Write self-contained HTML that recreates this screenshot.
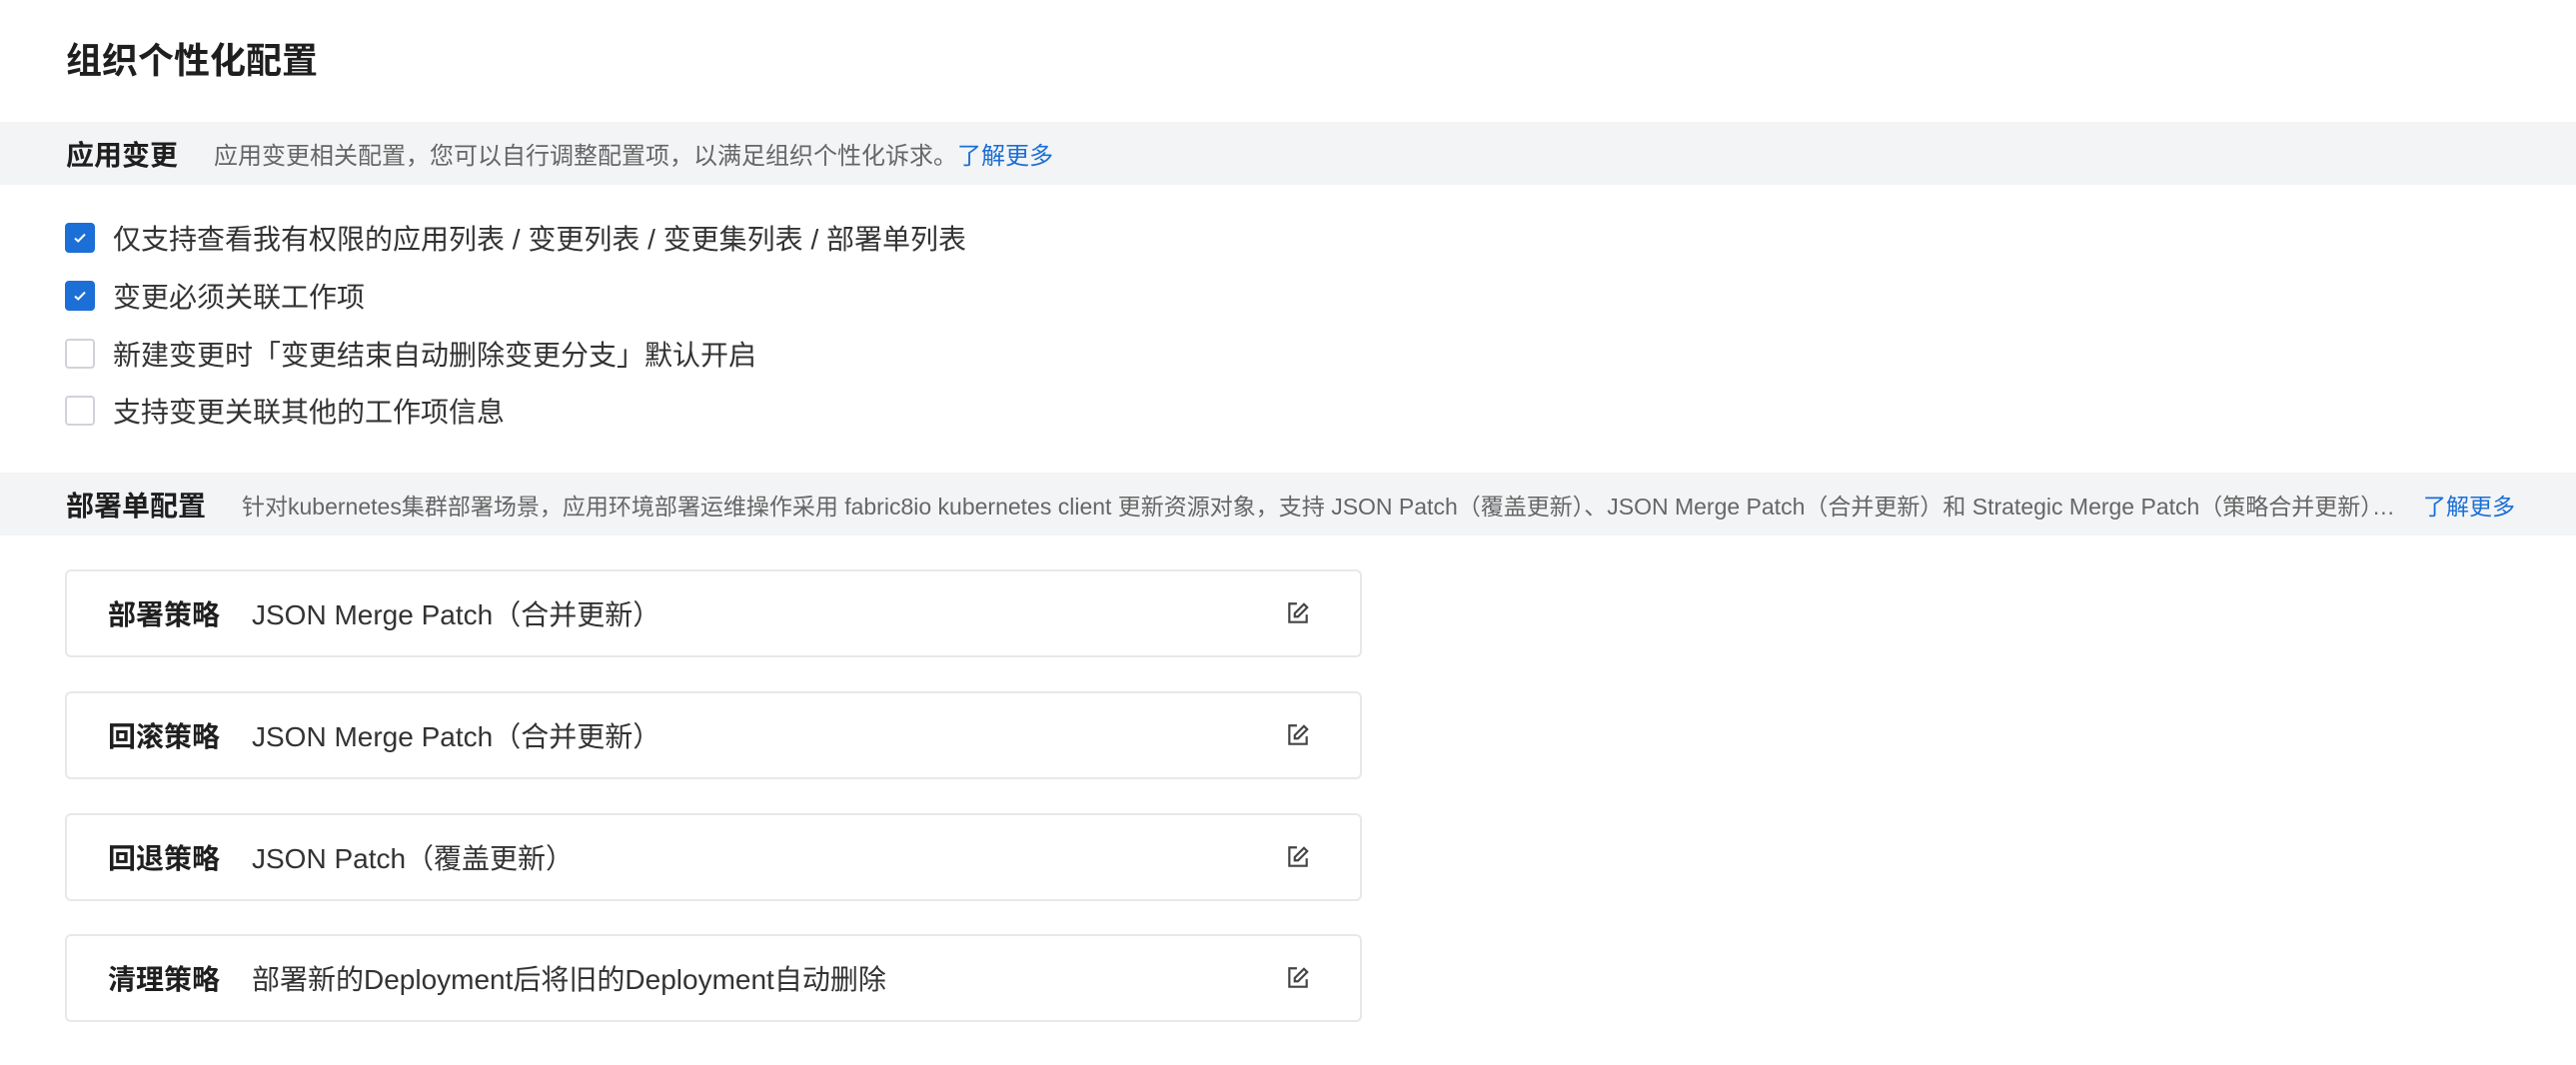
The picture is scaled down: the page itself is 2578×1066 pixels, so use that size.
<!DOCTYPE html>
<html><head><meta charset="utf-8"><style>
*{box-sizing:border-box;margin:0;padding:0}
body{width:2578px;height:1066px;background:#fff;font-family:"Liberation Sans","Noto Sans CJK SC",sans-serif;color:#1f1f1f;overflow:hidden;position:relative}
.title{position:absolute;left:66px;top:38px;font-size:36px;font-weight:bold;line-height:46px}
.band{position:absolute;left:0;width:2578px;height:63px;background:#f3f4f6;display:flex;align-items:center;padding-left:66px;white-space:nowrap}
.band b{font-size:28px;font-weight:bold;color:#1f1f1f}
.band .d{font-size:23px;color:#666;overflow:hidden;text-overflow:ellipsis}
.band a{font-size:23px;color:#1b6fd6;text-decoration:none}
.cb{position:absolute;left:65px;display:flex;align-items:center;font-size:28px;color:#333}
.box{width:30px;height:30px;border-radius:4px;border:2px solid #d0d3d9;margin-right:18px;display:flex;align-items:center;justify-content:center}
.box.on{background:#1b6fd6;border-color:#1b6fd6}
.card{position:absolute;left:65px;width:1298px;height:88px;border:2px solid #e6e8eb;border-radius:6px;display:flex;align-items:center;font-size:28px}
.card .l{position:absolute;left:41px;font-weight:bold;color:#1f1f1f}
.card .v{position:absolute;left:185px;color:#333}
.card svg{position:absolute;left:1219px;top:29px}
</style></head><body>
<div class="title">组织个性化配置</div>
<div class="band" style="top:122px"><b>应用变更</b><span class="d" style="margin-left:36px;font-size:24px">应用变更相关配置，您可以自行调整配置项，以满足组织个性化诉求。</span><a style="font-size:24px">了解更多</a></div>
<div class="cb" style="top:218px"><div class="box on"><svg width="16" height="16" viewBox="0 0 16 16"><path d="M3 8.5l3.2 3L13 4.5" fill="none" stroke="#fff" stroke-width="2"/></svg></div>仅支持查看我有权限的应用列表 / 变更列表 / 变更集列表 / 部署单列表</div>
<div class="cb" style="top:276px"><div class="box on"><svg width="16" height="16" viewBox="0 0 16 16"><path d="M3 8.5l3.2 3L13 4.5" fill="none" stroke="#fff" stroke-width="2"/></svg></div>变更必须关联工作项</div>
<div class="cb" style="top:334px"><div class="box"></div>新建变更时「变更结束自动删除变更分支」默认开启</div>
<div class="cb" style="top:391px"><div class="box"></div>支持变更关联其他的工作项信息</div>
<div class="band" style="top:473px"><b>部署单配置</b><span class="d" style="margin-left:36px;width:2166px;flex:none">针对kubernetes集群部署场景，应用环境部署运维操作采用 fabric8io kubernetes client 更新资源对象，支持 JSON Patch（覆盖更新）、JSON Merge Patch（合并更新）和 Strategic Merge Patch（策略合并更新），您可以根据实际需要选择合适的策略。</span><a style="margin-left:17px">了解更多</a></div>
<div class="card" style="top:570px"><span class="l">部署策略</span><span class="v">JSON Merge Patch（合并更新）</span><svg width="26" height="26" viewBox="0 0 24 24" fill="none" stroke="#444" stroke-width="2"><path d="M11 3H4v17h16v-7"/><path d="M17.5 3.5l3 3L12 15H9v-3z"/></svg></div>
<div class="card" style="top:692px"><span class="l">回滚策略</span><span class="v">JSON Merge Patch（合并更新）</span><svg width="26" height="26" viewBox="0 0 24 24" fill="none" stroke="#444" stroke-width="2"><path d="M11 3H4v17h16v-7"/><path d="M17.5 3.5l3 3L12 15H9v-3z"/></svg></div>
<div class="card" style="top:814px"><span class="l">回退策略</span><span class="v">JSON Patch（覆盖更新）</span><svg width="26" height="26" viewBox="0 0 24 24" fill="none" stroke="#444" stroke-width="2"><path d="M11 3H4v17h16v-7"/><path d="M17.5 3.5l3 3L12 15H9v-3z"/></svg></div>
<div class="card" style="top:935px"><span class="l">清理策略</span><span class="v">部署新的Deployment后将旧的Deployment自动删除</span><svg width="26" height="26" viewBox="0 0 24 24" fill="none" stroke="#444" stroke-width="2"><path d="M11 3H4v17h16v-7"/><path d="M17.5 3.5l3 3L12 15H9v-3z"/></svg></div>
</body></html>
